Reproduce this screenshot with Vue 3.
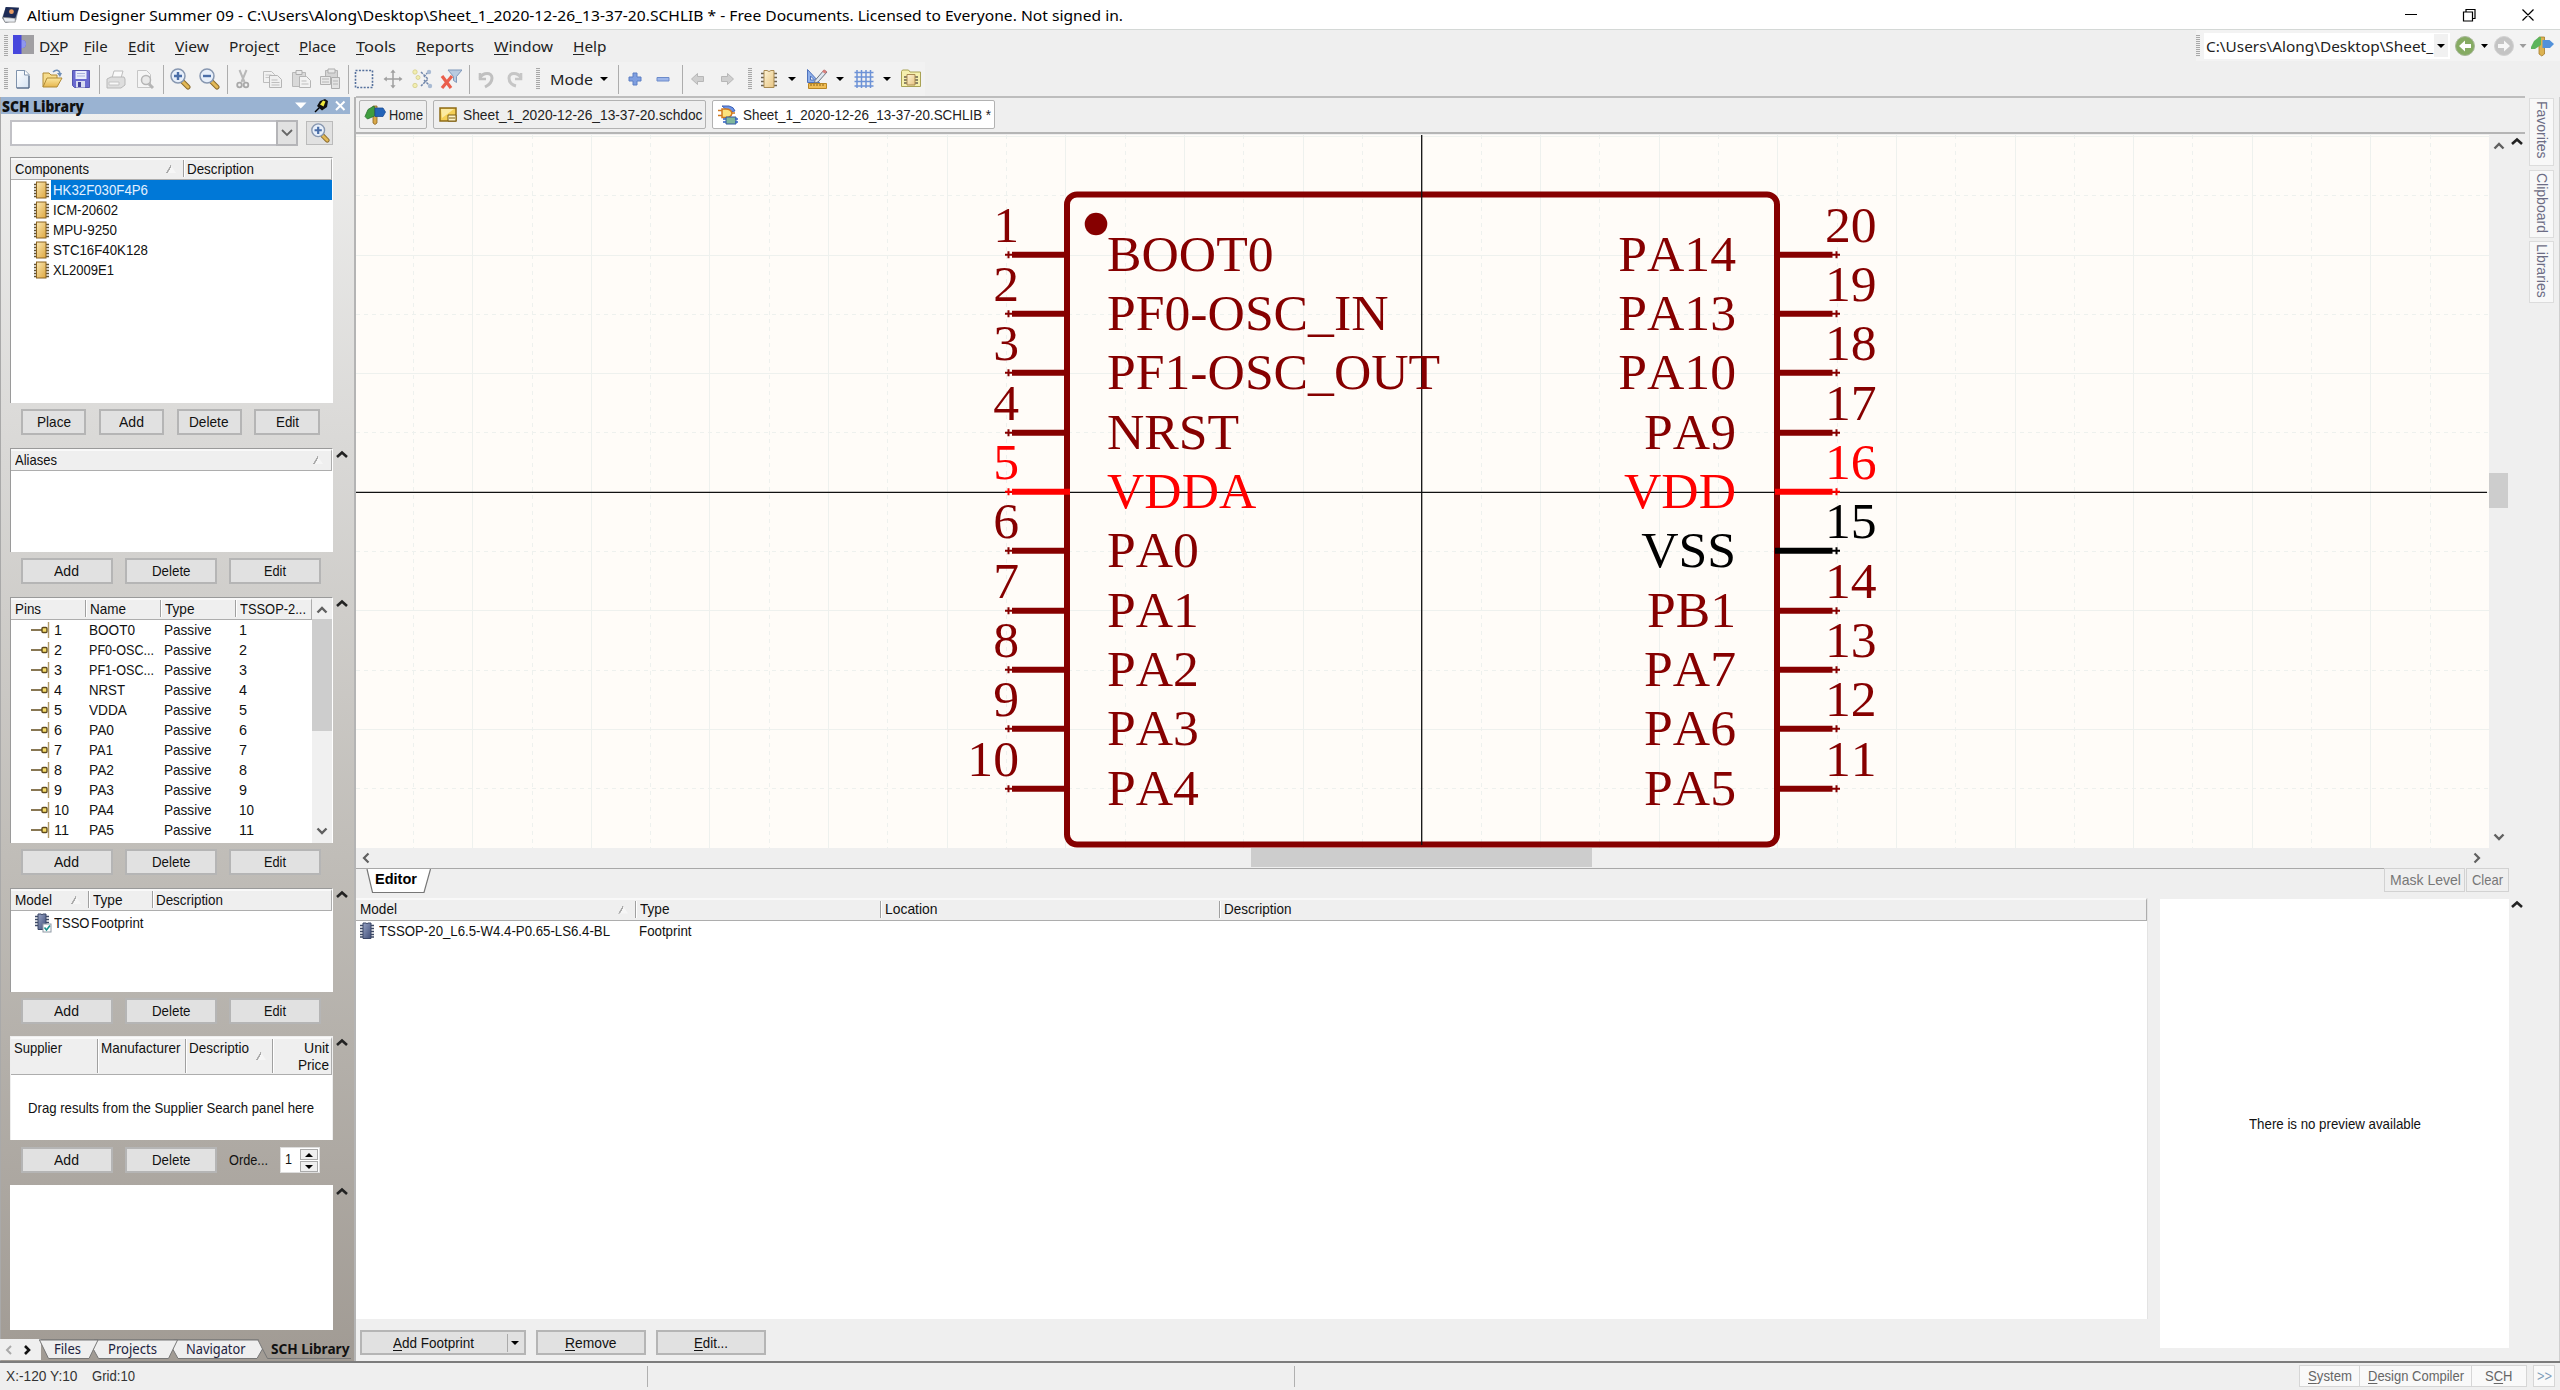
<script setup>
// Stretches or condenses a run of text to the given pixel width.
const vFit = {
  mounted(el, { value }) {
    const natural = el.getBoundingClientRect().width
    if (!natural) return
    el.style.transform = `scaleX(${value / natural})`
    el.style.marginRight = `${value - natural}px`
  },
}

const icons = {
  fresh: '<path d="M4.500 2.500h8.500l4 4v13.500H4.500z" fill="url(#paper)" stroke="#7f93ad"/><path d="M12.500 2.500v4.500h4.500" fill="#fff" stroke="#7f93ad"/><path d="M17 8v12H5" fill="none" stroke="#4d617f"/>',
  open: '<path d="M2 19V5h6l2 2h6v4" fill="#f6dc8c" stroke="#b08a35"/><path d="M2 19l4-9h15l-5 9z" fill="url(#gold)" stroke="#b08a35"/><path d="M12 4c3-3 6-2 7 1" fill="none" stroke="#6f8fb8" stroke-width="1.600"/><path d="M16 5l5 0-2 4z" fill="#6f8fb8"/>',
  save: '<path d="M2.500 2.500h17v17h-15l-2-2z" fill="#6a6ad0" stroke="#5555ad"/><rect x="5.500" y="3" width="11" height="8" fill="#e9ecfb"/><path d="M7 5.500h8M7 8h8" stroke="#a8b0dc"/><rect x="6" y="13" width="9" height="6.500" fill="#d8dcf2"/><rect x="8" y="14" width="3" height="5" fill="#43439c"/>',
  print: '<path d="M7 10l2-7h9l-2 7" fill="#fafafa" stroke="#bdbdbd"/><path d="M2 11l4-2h13l1 2v6l-4 3H2z" fill="#dedede" stroke="#b8b8b8"/><path d="M4 14h10v3H4z" fill="#f8f8f8" stroke="#c4c4c4"/>',
  preview: '<path d="M3.500 2.500h9l4 4v13h-13z" fill="#f5f5f5" stroke="#c6c6c6"/><circle cx="12" cy="12" r="4.500" fill="#e9e9e9" stroke="#b5b5b5" stroke-width="1.500"/><path d="M15 16l4 4" stroke="#b5b5b5" stroke-width="3"/>',
  zoomin: '<path d="M14 14l5 5" stroke="#8a6a2b" stroke-width="5" stroke-linecap="round"/><path d="M14 14l5 5" stroke="#e2b856" stroke-width="3" stroke-linecap="round"/><circle cx="9" cy="8" r="7" fill="#e7effa" stroke="#8797b0" stroke-width="1.500"/><path d="M9 4v8M5 8h8" stroke="#4a6ea8" stroke-width="2.400"/>',
  zoomout: '<path d="M14 14l5 5" stroke="#8a6a2b" stroke-width="5" stroke-linecap="round"/><path d="M14 14l5 5" stroke="#e2b856" stroke-width="3" stroke-linecap="round"/><circle cx="9" cy="8" r="7" fill="#e7effa" stroke="#8797b0" stroke-width="1.500"/><path d="M5 8h8" stroke="#4a6ea8" stroke-width="2.400"/>',
  cut: '<path d="M7.500 2l5 12M14.500 2l-5 12" stroke="#b9b9b9" stroke-width="2"/><circle cx="7.500" cy="17" r="2.300" fill="none" stroke="#a9a9a9" stroke-width="1.800"/><circle cx="14" cy="17" r="2.300" fill="none" stroke="#a9a9a9" stroke-width="1.800"/>',
  copy: '<path d="M2.500 3.500h8l3 3v8h-11z" fill="#f2f2f2" stroke="#bdbdbd"/><path d="M4.500 7h6M4.500 9.500h6" stroke="#c8c8c8"/><path d="M8.500 7.500h8l4 4v8h-12z" fill="#f0f0f0" stroke="#b5b5b5"/><path d="M10.500 12h6M10.500 14.500h8M10.500 17h8" stroke="#bdbdbd"/>',
  paste: '<path d="M2.500 4.500h13v14h-13z" fill="#d9d9d9" stroke="#b8b8b8"/><path d="M6 2.500h6v4H6z" fill="#e9e9e9" stroke="#adadad"/><path d="M9.500 8.500h7l4 4v7h-11z" fill="#f3f3f3" stroke="#b5b5b5"/><path d="M11.500 13h5M11.500 16h7" stroke="#bdbdbd"/>',
  pasteall: '<path d="M6.500 2.500h12v12h-12z" fill="#d4d4d4" stroke="#b3b3b3"/><path d="M9 1h7v4H9z" fill="#e9e9e9" stroke="#adadad"/><path d="M1.500 8.500h10v8h-10z" fill="#e9e9e9" stroke="#b0b0b0"/><path d="M12.500 9.500h8v11h-8z" fill="#e3e3e3" stroke="#adadad"/><path d="M3 11h7M3 14h7M14 13h5M14 16h5" stroke="#b5b5b5"/>',
  select: '<rect x="2.500" y="2.500" width="17" height="17" fill="none" stroke="#55709c" stroke-width="1.600" stroke-dasharray="2 1.400"/>',
  move: '<path d="M11 3.500v15M3.500 11h15" stroke="#a0a0a0" stroke-width="1.500"/><path d="M11 1.500l2.600 3.300H8.400zM11 20.500l2.600-3.300H8.400zM1.500 11l3.300-2.600v5.200zM20.500 11l-3.300-2.600v5.200z" fill="#a0a0a0"/>',
  wires: '<path d="M10 4l7 7-7 7M13 12l6 6M13 9l5-6" stroke="#7187ab" stroke-width="1.500" fill="none" stroke-dasharray="2.500 1"/><g fill="#f2eeb0" stroke="#d3cd8a" stroke-width=".8"><circle cx="4" cy="4" r="2.200"/><circle cx="7" cy="9.500" r="2"/><circle cx="4" cy="17.500" r="2.200"/></g><g fill="#a9bbd3"><circle cx="18" cy="4" r="2.200"/><circle cx="19" cy="18" r="2.200"/></g>',
  clearf: '<path d="M8 2h14l-5.500 6.500v6l-3-2v-4z" fill="#b9cbe0" stroke="#7f98ba"/><path d="M2 8l9 12M12 8L2 20" stroke="#ea5f4c" stroke-width="3.200"/>',
  undo: '<path d="M6 5v6h6" fill="none" stroke="#c0c0c0" stroke-width="2.600"/><path d="M6 10c3-6 12-6 12 0 0 4-3 7-7 9" fill="none" stroke="#c0c0c0" stroke-width="3"/>',
  redo: '<path d="M17 5v6h-6" fill="none" stroke="#c6c6c6" stroke-width="2.600"/><path d="M17 10C14 4 5 4 5 10c0 4 3 7 7 8" fill="none" stroke="#c6c6c6" stroke-width="3"/>',
  plus: '<path d="M9 5h4v4h4v4h-4v4H9v-4H5V9h4z" fill="#7f9fe0" stroke="#5c7fc4"/>',
  minus: '<path d="M5 9.500h12v3.500H5z" fill="#9db6ea" stroke="#6c8bca"/>',
  left: '<path d="M4.500 11l6-5.500v3h6v5h-6v3z" fill="#cfcfcf" stroke="#b7b7b7"/>',
  right: '<path d="M17.500 11l-6-5.500v3h-6v5h6v3z" fill="#cfcfcf" stroke="#b7b7b7"/>',
  part: '<path d="M3 5.500h16M3 9.500h16M3 13.500h16M3 17.500h16" stroke="#6b6250" stroke-width="1.600"/><path d="M6 2.500h3q2 2 4 0h3v17H6z" fill="url(#cream)" stroke="#a98a52"/>',
  ruler: '<path d="M1.500 1.500v13h12z" fill="#8fb0ea" stroke="#4e72bd"/><path d="M4.500 8v4h4z" fill="#f3f3f3" stroke="#4e72bd"/><path d="M9 12.500L18 2l3 2-9 10-3.500 1z" fill="#dfe6ef" stroke="#6d7480"/><path d="M18 1.500l3 2-2 2.300-3-2.300z" fill="#d9807c"/><path d="M2.500 15.500h18v5h-18z" fill="#f0bd55" stroke="#b98624"/><path d="M5 16v2M8 16v2M11 16v2M14 16v2M17 16v2" stroke="#8a6216"/>',
  grid: '<path d="M4 2v18M8.500 2v18M13 2v18M17.500 2v18M1.500 4.500h19M1.500 9h19M1.500 13.500h19M1.500 18h19" stroke="#6d92d6" stroke-width="1.500"/>',
  folder: '<path d="M1.500 3.500l1-1.500h6l1.500 2h10.500v14.500h-19z" fill="#f5f0ae" stroke="#a9a255"/><path d="M4 9h14M4 12h14M4 15h14" stroke="#6b6250" stroke-width="1.300"/><path d="M7 6.500h8v10.500H7z" fill="url(#cream)" stroke="#a98a52"/>',
  chip: '<path d="M1 3.500h15M1 6.500h15M1 9.500h15M1 12.500h15M1 15.500h15" stroke="#5e5238" stroke-width="1.300"/><rect x="3.500" y="1" width="9.500" height="16" fill="url(#amber)" stroke="#8a6320"/>',
  foot: '<path d="M1 3.500h14M1 6.500h14M1 9.500h14M1 12.500h14M1 15h14" stroke="#3e4a66" stroke-width="1.300"/><path d="M4 1h3q1 1.500 2 0h3v15.500H4z" fill="url(#slate)" stroke="#3a4666"/>',
  footok: '<path d="M0 3.500h14M0 6.500h14M0 9.500h14M0 12.500h14" stroke="#3e4a66" stroke-width="1.300"/><path d="M3 1h3q1 1.500 2 0h3v15.500H3z" fill="url(#slate)" stroke="#3a4666"/><rect x="8" y="11" width="8" height="8" fill="#fff" stroke="#8f9aa5"/><path d="M9.500 14.500l2 2.500 3.500-4.500" fill="none" stroke="#17908a" stroke-width="1.600"/>',
  pin: '<path d="M0 9h11" stroke="#6b5528" stroke-width="1.600"/><rect x="11" y="6.500" width="5" height="5" rx="1" fill="#f5dc6a" stroke="#5f4a1c" stroke-width="1.400"/><path d="M17.500 1v16" stroke="#b09a68" stroke-width="1.400"/>',
  sign: '<path d="M9 2h4v17l-2 1.500-2-1.500z" fill="#d9a848" stroke="#8b6520" stroke-width=".8"/><path d="M1 12.500l3-7 5-3h1.500v9.500l-7 3z" fill="#3f9e3f" stroke="#2b7030" stroke-width=".8"/><path d="M11 4h8l2.500 4-2.500 4.500h-8z" fill="#2464b8" stroke="#1f4f96" stroke-width=".8"/>',
}

const menus = [
  ['D', 'X', 'P', 29.5, 39], ['', 'F', 'ile', 24, 83.7], ['', 'E', 'dit', 27, 128], ['', 'V', 'iew', 34, 175],
  ['Proje', 'c', 't', 50.5, 229], ['', 'P', 'lace', 37, 299], ['', 'T', 'ools', 40, 356], ['', 'R', 'eports', 58, 416],
  ['', 'W', 'indow', 59, 494], ['', 'H', 'elp', 33.5, 573],
].map((m, i, all) => ({ pre: m[0], key: m[1], post: m[2], w: m[3], gap: i ? m[4] - all[i - 1][4] - all[i - 1][3] : 5 }))

// Each tool is [kind, centre on the bar, cell width].
const tools = [
  ['grip', 6, 4], ['fresh', 23, 22], ['open', 52, 22], ['save', 81, 22], ['sep', 99, 2], ['print', 116, 22],
  ['preview', 145, 22], ['sep', 163, 2], ['zoomin', 180, 22], ['zoomout', 209, 22], ['sep', 227, 2], ['cut', 243, 22],
  ['copy', 272, 22], ['paste', 301, 22], ['pasteall', 330, 22], ['sep', 348, 2], ['select', 364, 22], ['move', 393, 22],
  ['wires', 422, 22], ['clearf', 451, 22], ['sep', 469, 2], ['undo', 485, 22], ['redo', 515, 22], ['grip', 538, 4],
  ['mode', 571.5, 43], ['drop', 604, 8], ['sep', 618.5, 2], ['plus', 634.5, 22], ['minus', 663, 22], ['sep', 682, 2],
  ['left', 698, 22], ['right', 727, 22], ['grip', 750, 4], ['part', 769, 22], ['drop', 791.5, 8], ['ruler', 816.5, 22],
  ['drop', 839.5, 8], ['grid', 864, 22], ['drop', 886.5, 8], ['folder', 910.5, 22],
].map((t, i, all) => {
  const prev = i ? all[i - 1][1] + all[i - 1][2] / 2 : 0
  return { kind: t[0], w: t[2], gap: t[1] - t[2] / 2 - prev }
})

const components = [['HK32F030F4P6', 95], ['ICM-20602', 65], ['MPU-9250', 64], ['STC16F40K128', 95], ['XL2009E1', 61]]
const pinRows = [
  ['BOOT0', 46], ['PF0-OSC...', 65], ['PF1-OSC...', 65], ['NRST', 36], ['VDDA', 38], ['PA0', 25],
  ['PA1', 24], ['PA2', 25], ['PA3', 25], ['PA4', 25], ['PA5', 25],
]
const trio = [['Add', 25], ['Delete', 38.5], ['Edit', 22]]

const X0 = 1421.8, Y0 = 492.3, STEP = 59.32
const vLines = Array.from({ length: 35 }, (_, i) => i - 17).map(k => ({ p: Math.round(X0 + k * STEP - 0.5) + 0.5, dash: k % 2 !== 0 }))
const hLines = Array.from({ length: 12 }, (_, i) => i - 6).map(k => ({ p: Math.round(Y0 + k * STEP - 0.5) + 0.5, dash: k % 2 !== 0 }))
const leftNames = ['BOOT0', 'PF0-OSC_IN', 'PF1-OSC_OUT', 'NRST', 'VDDA', 'PA0', 'PA1', 'PA2', 'PA3', 'PA4']
const rightNames = ['PA14', 'PA13', 'PA10', 'PA9', 'VDD', 'VSS', 'PB1', 'PA7', 'PA6', 'PA5']
const tint = n => (n === 'VDDA' || n === 'VDD' ? '#ff0000' : n === 'VSS' ? '#000' : '#860000')
const pins = leftNames.map((l, i) => ({
  y: Math.round(254.7 + i * 59.33) - 0.3, l, r: rightNames[i], ln: i + 1, rn: 20 - i, lc: tint(l), rc: tint(rightNames[i]),
}))
</script>

<template>
  <div class="app">
    <svg class="defs" width="0" height="0">
      <defs>
        <linearGradient id="paper" x1="0" y1="0" x2="1" y2="1"><stop offset="0" stop-color="#fff" /><stop offset="1" stop-color="#d5e2f2" /></linearGradient>
        <linearGradient id="gold" x1="0" y1="0" x2="0" y2="1"><stop offset="0" stop-color="#fbe7a0" /><stop offset="1" stop-color="#e6b64e" /></linearGradient>
        <linearGradient id="cream" x1="0" y1="0" x2="1" y2="1"><stop offset="0" stop-color="#fdf3d4" /><stop offset="1" stop-color="#e8c583" /></linearGradient>
        <linearGradient id="amber" x1="0" y1="0" x2="1" y2="1"><stop offset="0" stop-color="#fbe9b4" /><stop offset="1" stop-color="#dda63e" /></linearGradient>
        <linearGradient id="slate" x1="0" y1="0" x2="1" y2="1"><stop offset="0" stop-color="#97a3c4" /><stop offset="1" stop-color="#3f4d78" /></linearGradient>
      </defs>
    </svg>

    <header class="title">
      <svg class="logo" viewBox="0 0 20 20"><path d="M5 2l14 1-3 13-11 3-4-5z" fill="#8d97a6" /><path d="M5 2l14 1-4 11-13-1z" fill="#1d2b55" /><path d="M2 13l13 1v4l-11 0z" fill="#e9edf2" stroke="#666" stroke-width=".6" /><circle cx="11" cy="7" r="2.500" fill="#e79b62" /></svg>
      <span class="cap"><span v-fit="1096">Altium Designer Summer 09 - C:\Users\Along\Desktop\Sheet_1_2020-12-26_13-37-20.SCHLIB * - Free Documents. Licensed to Everyone. Not signed in.</span></span>
      <svg class="winbtns" width="132" height="14" viewBox="0 0 132 14"><path d="M0 6.500h12M58.500 4h9v9h-9zM61 4V1.500h9v9h-2.500M117.500 1.500l11 11M128.500 1.500l-11 11" fill="none" stroke="#000" stroke-width="1.200" /></svg>
    </header>

    <nav class="menu">
      <i class="grip first"></i>
      <svg class="dxp" width="21" height="19" viewBox="0 0 21 19"><rect width="21" height="19" fill="#a09fa3" /><path d="M0 0h8.500v5c6-1 6 9 0 8v6H0z" fill="#4747dd" /><path d="M8.500 5c6-1 6 9 0 8z" fill="#8f97ee" /></svg>
      <span v-for="m in menus" :key="m.w" class="mi" :style="{ marginLeft: m.gap + 'px' }"><span v-fit="m.w">{{ m.pre }}<u>{{ m.key }}</u>{{ m.post }}</span></span>
      <div class="addr">
        <i class="grip"></i>
        <div class="field"><span v-fit="227">C:\Users\Along\Desktop\Sheet_</span><b class="fdrop"><i class="tri"></i></b></div>
        <svg width="104" height="26" viewBox="2453 32 104 26">
          <circle cx="2465" cy="45" r="9.500" fill="#86ab63" stroke="#a9b89b" /><path d="M2459 45l6-5.500v3.500h6v4h-6v3.500z" fill="#fff" />
          <path d="M2481 43h7l-3.500 4z" fill="#000" />
          <circle cx="2504" cy="45" r="9.500" fill="#c4c4c4" stroke="#d2d2d2" /><path d="M2510 45l-6-5.500v3.500h-6v4h6v3.500z" fill="#f6f6f6" />
          <path d="M2519.500 43h7l-3.500 4z" fill="#9b9b9b" />
          <path d="M2539 36h5.500v17l-2.700 2-2.800-2z" fill="#dcb251" stroke="#a57b2c" stroke-width=".8" /><path d="M2531 46l3-6 5-4h2v8l-6 4h-4z" fill="#5db45c" /><path d="M2542.500 39h7l4.500 4-4 4h-7.500z" fill="#5191da" />
        </svg>
      </div>
    </nav>

    <div class="tools">
      <div class="toolstrip">
        <div v-for="(t, i) in tools" :key="i" class="cell" :style="{ width: t.w + 'px', marginLeft: t.gap + 'px' }">
          <i v-if="t.kind === 'grip'" class="grip"></i>
          <i v-else-if="t.kind === 'sep'" class="vsep"></i>
          <i v-else-if="t.kind === 'drop'" class="tri"></i>
          <span v-else-if="t.kind === 'mode'" v-fit="43">Mode</span>
          <svg v-else width="22" height="22" viewBox="0 0 22 22" v-html="icons[t.kind]"></svg>
        </div>
      </div>
    </div>

    <main class="main">
      <aside class="side">
        <div class="phead">
          <b v-fit="82">SCH Library</b>
          <svg width="52" height="16" viewBox="294 98 52 16"><path d="M295 102.500h11.500l-5.700 6z" fill="#fff" /><path d="M315 112l5-5" stroke="#000" stroke-width="1.500" /><path d="M317 106l3-5 5-2 3 2-1 6-5 3.500z" fill="#111" /><path d="M320 104.500l3-4 2.500 1-2 5z" fill="#f0e83c" /><path d="M336 101.500l8.500 8.500M344.500 101.500l-8.500 8.500" stroke="#fff" stroke-width="2" /></svg>
        </div>
        <div class="search">
          <div class="combo"><span class="cbtn"><svg width="12" height="8" viewBox="0 0 12 8"><path d="M1 1l5 5 5-5" fill="none" stroke="#666" stroke-width="1.800" /></svg></span></div>
          <div class="zbtn"><svg width="20" height="20" viewBox="0 0 22 22" v-html="icons.zoomin"></svg></div>
        </div>

        <section class="sec comps">
          <div class="list">
            <div class="lh"><span class="c1"><span v-fit="74">Components</span><i class="sort"></i></span><i class="hs"></i><span class="c2"><span v-fit="67">Description</span></span></div>
            <div v-for="(c, i) in components" :key="c[0]" class="row">
              <svg class="ri" width="18" height="18" viewBox="0 0 18 18" v-html="icons.chip"></svg>
              <span class="rt" :class="{ sel: i === 0 }"><span v-fit="c[1]">{{ c[0] }}</span></span>
            </div>
          </div>
        </section>
        <div class="btns four"><button><span v-fit="34">Place</span></button><button><span v-fit="25">Add</span></button><button><span v-fit="39.500">Delete</span></button><button><span v-fit="23">Edit</span></button></div>

        <section class="sec aliases">
          <div class="list"><div class="lh"><span class="fill"><span v-fit="42">Aliases</span><i class="sort"></i></span></div></div>
          <svg class="chev" width="12" height="8" viewBox="0 0 12 8"><path d="M1 7l5-4.500L11 7" /></svg>
        </section>
        <div class="btns"><button v-for="b in trio" :key="b[0]"><span v-fit="b[1]">{{ b[0] }}</span></button></div>

        <section class="sec pinlist">
          <div class="list scroller">
            <div class="body">
              <div class="lh"><span class="p1"><span v-fit="26">Pins</span></span><i class="hs"></i><span class="p2"><span v-fit="36">Name</span></span><i class="hs"></i><span class="p2"><span v-fit="29.5">Type</span></span><i class="hs"></i><span class="p2"><span v-fit="66">TSSOP-2...</span></span></div>
              <div v-for="(p, i) in pinRows" :key="i" class="row prow">
                <svg class="pi" width="19" height="18" viewBox="0 0 19 18" v-html="icons.pin"></svg>
                <span class="n1"><span v-fit="i > 8 ? 15 : 8">{{ i + 1 }}</span></span>
                <span class="n2"><span v-fit="p[1]">{{ p[0] }}</span></span>
                <span class="n2"><span v-fit="47.5">Passive</span></span>
                <span class="n1"><span v-fit="i > 8 ? 15 : 8">{{ i + 1 }}</span></span>
              </div>
            </div>
            <div class="sb">
              <svg width="12" height="8" viewBox="0 0 12 8"><path d="M1.500 6.500L6 2l4.500 4.500" fill="none" stroke="#606060" stroke-width="2.400" /></svg>
              <i class="thumb"></i>
              <svg class="dn" width="12" height="8" viewBox="0 0 12 8"><path d="M1.500 1.500L6 6l4.500-4.500" fill="none" stroke="#606060" stroke-width="2.400" /></svg>
            </div>
          </div>
          <svg class="chev" width="12" height="8" viewBox="0 0 12 8"><path d="M1 7l5-4.500L11 7" /></svg>
        </section>
        <div class="btns"><button v-for="b in trio" :key="b[0]"><span v-fit="b[1]">{{ b[0] }}</span></button></div>

        <section class="sec models">
          <div class="list">
            <div class="lh"><span class="m1"><span v-fit="37">Model</span><i class="sort"></i></span><i class="hs"></i><span class="m2"><span v-fit="29.5">Type</span></span><i class="hs"></i><span class="c2"><span v-fit="67">Description</span></span></div>
            <div class="row mrow"><svg width="18" height="20" viewBox="0 0 18 20" v-html="icons.footok"></svg><span class="t1"><span v-fit="35.500">TSSO</span></span><span v-fit="52.500">Footprint</span></div>
          </div>
          <svg class="chev" width="12" height="8" viewBox="0 0 12 8"><path d="M1 7l5-4.500L11 7" /></svg>
        </section>
        <div class="btns"><button v-for="b in trio" :key="b[0]"><span v-fit="b[1]">{{ b[0] }}</span></button></div>

        <section class="sec supply">
          <div class="list">
            <div class="lh tall"><span class="s1"><span v-fit="48">Supplier</span></span><i class="hs"></i><span class="s2"><span v-fit="79.5">Manufacturer</span></span><i class="hs"></i><span class="s2"><span v-fit="60">Descriptio</span><i class="sort low"></i></span><i class="hs"></i><span class="s3"><span v-fit="25">Unit</span><span v-fit="31">Price</span></span></div>
            <div class="hint"><span v-fit="286">Drag results from the Supplier Search panel here</span></div>
          </div>
          <svg class="chev" width="12" height="8" viewBox="0 0 12 8"><path d="M1 7l5-4.500L11 7" /></svg>
        </section>
        <div class="btns order">
          <button><span v-fit="25">Add</span></button><button><span v-fit="38.5">Delete</span></button>
          <label><span v-fit="39">Orde...</span></label>
          <div class="spin"><span v-fit="7">1</span><div class="arrows"><b><i class="tri up"></i></b><b><i class="tri"></i></b></div></div>
        </div>

        <section class="sec blank">
          <div class="list bare"></div>
          <svg class="chev" width="12" height="8" viewBox="0 0 12 8"><path d="M1 7l5-4.500L11 7" /></svg>
        </section>

        <div class="ptabs">
          <svg width="351" height="22" viewBox="0 1339 351 22">
            <rect x="0" y="1339" width="41" height="21" fill="#efefef" />
            <path d="M11 1346l-4 4 4 4" fill="none" stroke="#a9a9a9" stroke-width="2" /><path d="M25 1346l4 4-4 4" fill="none" stroke="#111" stroke-width="2.600" />
            <path d="M39 1340h220" stroke="#777" />
            <g fill="#efefef" stroke="#777"><path d="M173.500 1340h84.500l4.500 9-5.500 9.500h-79l-5-9z" /><path d="M94 1340h83.500l-9 18.500H98.500l-5-9z" /><path d="M39.500 1340h58.500l-9 18.500H48.500z" /></g>
            <path d="M262.500 1349l5 9.500h84" fill="none" stroke="#777" />
          </svg>
          <div class="plabels"><span class="l1"><span v-fit="27">Files</span></span><span class="l2"><span v-fit="49">Projects</span></span><span class="l3"><span v-fit="59.500">Navigator</span></span><b><span v-fit="78.500">SCH Library</span></b></div>
        </div>
      </aside>

      <div class="center">
        <div class="doctabs">
          <div class="dt home"><svg width="22" height="22" viewBox="0 0 22 22" v-html="icons.sign"></svg><span v-fit="34">Home</span></div>
          <div class="dt doc"><svg width="18" height="16" viewBox="0 0 18 16"><path d="M1 1h16v13H1z" fill="#f4cf55" stroke="#8e6c18" stroke-width="1.500" /><path d="M2 2h13l-12 9z" fill="#fbeaa2" /><path d="M9 8h8v6H9z" fill="#fdf3c5" stroke="#7a5c14" /><path d="M10 11h6" stroke="#7a5c14" /></svg><span v-fit="239.5">Sheet_1_2020-12-26_13-37-20.schdoc</span></div>
          <div class="dt lib"><svg width="20" height="20" viewBox="0 0 20 20"><path d="M4 1h7q5 1 6 5l-6 1z" fill="#6d93e6" stroke="#3f62b4" /><path d="M0 5.500h4M0 10.500h4M14 8h3" stroke="#d0781e" stroke-width="1.500" /><path d="M4 4h4q5 0 6 4.300-1 4.200-6 4.200H4z" fill="#fbe27c" stroke="#d0781e" stroke-width="1.500" /><path d="M8 12h10v7H8z" fill="#7fb79b" stroke="#33599f" /><path d="M5 14h3M5 17h3M17 14h3M17 17h3" stroke="#2f62c4" stroke-width="1.400" /></svg><span v-fit="248">Sheet_1_2020-12-26_13-37-20.SCHLIB *</span></div>
        </div>
        <div class="editor">
          <div class="canvasrow">
            <svg class="canvas" width="2133" height="713" viewBox="356 135 2133 713">
              <rect x="356" y="135" width="2133" height="713" fill="#fffcf8" />
              <g stroke="#eef1ee">
                <path v-for="v in vLines" :key="'v' + v.p" :d="`M${v.p} 135V848`" :stroke-dasharray="v.dash ? '4 4' : null" />
                <path v-for="v in hLines" :key="'h' + v.p" :d="`M356 ${v.p}H2489`" :stroke-dasharray="v.dash ? '4 4' : null" />
              </g>
              <rect x="1067" y="194.500" width="710" height="650" rx="10" fill="none" stroke="#860000" stroke-width="6" />
              <path d="M1421.700 135V845M356 492.300H2487" stroke="#111" stroke-width="1.300" />
              <circle cx="1096" cy="224" r="11.300" fill="#860000" />
              <g v-for="p in pins" :key="p.y">
                <path :d="`M1012 ${p.y}H${p.ln === 5 ? 1070 : 1067}`" :stroke="p.lc" stroke-width="6" />
                <path :d="`M1005 ${p.y}H1012M1008.500 ${p.y - 3.500}v7`" :stroke="p.lc" stroke-width="2" />
                <path :d="`M${p.rn === 16 || p.rn === 15 ? 1775 : 1777} ${p.y}H1832.500`" :stroke="p.rc" stroke-width="6" />
                <path :d="`M1832 ${p.y}H1840M1836.500 ${p.y - 3.500}v7`" :stroke="p.rc" stroke-width="2" />
                <text x="1019" :y="p.y - 13" text-anchor="end" :fill="p.lc">{{ p.ln }}</text>
                <text x="1107" :y="p.y + 16.700" :fill="p.lc">{{ p.l }}</text>
                <text x="1736" :y="p.y + 16.700" text-anchor="end" :fill="p.rc">{{ p.r }}</text>
                <text x="1825" :y="p.y - 13" :fill="p.rc">{{ p.rn }}</text>
              </g>
            </svg>
            <div class="vbar">
              <svg width="12" height="8" viewBox="0 0 12 8"><path d="M1.500 6.500L6 2l4.500 4.500" fill="none" stroke="#606060" stroke-width="2.400" /></svg>
              <i class="thumb"></i>
              <svg class="dn" width="12" height="8" viewBox="0 0 12 8"><path d="M1.500 1.500L6 6l4.500-4.500" fill="none" stroke="#606060" stroke-width="2.400" /></svg>
            </div>
            <svg class="chev ext" width="12" height="8" viewBox="0 0 12 8"><path d="M1 7l5-4.500L11 7" /></svg>
          </div>
          <div class="hbar">
            <svg width="8" height="12" viewBox="0 0 8 12"><path d="M6.500 1.500L2 6l4.500 4.500" fill="none" stroke="#606060" stroke-width="2.200" /></svg>
            <i class="thumb"></i>
            <svg class="hright" width="8" height="12" viewBox="0 0 8 12"><path d="M1.500 1.500L6 6l-4.500 4.500" fill="none" stroke="#606060" stroke-width="2.200" /></svg>
          </div>
          <div class="etabs">
            <div class="rule"><div class="etab"><svg width="66" height="25" viewBox="0 0 66 25"><path d="M1 0l5.500 23.500h51.500L64.500 0" fill="#fff" stroke="#777" stroke-width="1.200" /></svg><b><span v-fit="42">Editor</span></b></div></div>
            <div class="mask"><span v-fit="71">Mask Level</span></div><div class="mask clr"><span v-fit="31">Clear</span></div>
          </div>
          <div class="lower">
            <div class="tablecol">
              <div class="table">
                <div class="lh"><span class="t1"><span v-fit="37">Model</span><i class="sort"></i></span><i class="hs"></i><span class="t2"><span v-fit="29.5">Type</span></span><i class="hs"></i><span class="t3"><span v-fit="52.5">Location</span></span><i class="hs"></i><span class="t2"><span v-fit="67.5">Description</span></span></div>
                <div class="row trow"><svg width="16" height="18" viewBox="0 0 16 18" v-html="icons.foot"></svg><span class="tn"><span v-fit="231">TSSOP-20_L6.5-W4.4-P0.65-LS6.4-BL</span></span><span v-fit="52.500">Footprint</span></div>
              </div>
              <div class="acts">
                <button class="addf"><span class="lbl"><span v-fit="81"><u>A</u>dd Footprint</span></span><i class="bs"></i><i class="tri"></i></button>
                <button><span v-fit="51.500"><u>R</u>emove</span></button>
                <button><span v-fit="34"><u>E</u>dit...</span></button>
              </div>
            </div>
            <div class="preview"><span v-fit="172">There is no preview available</span></div>
            <svg class="chev pv" width="12" height="8" viewBox="0 0 12 8"><path d="M1 7l5-4.500L11 7" /></svg>
          </div>
        </div>
      </div>

      <div class="rail">
        <div class="rt1"><span>Favorites</span></div>
        <div class="rt1"><span>Clipboard</span></div>
        <div class="rt1 short"><span>Libraries</span></div>
      </div>
    </main>

    <footer class="status">
      <span class="st1"><span v-fit="71.500">X:-120 Y:10</span><span class="gr"><span v-fit="43">Grid:10</span></span></span>
      <i class="ss"></i><i class="ss two"></i>
      <div class="sys">
        <span class="b1"><span v-fit="44"><u>S</u>ystem</span></span><span class="b2"><span v-fit="96"><u>D</u>esign Compiler</span></span><span class="b3"><span v-fit="27.5">S<u>C</u>H</span></span>
      </div>
      <div class="more"><span v-fit="15">&gt;&gt;</span></div>
    </footer>
  </div>
</template>

<style>
body { margin: 0; overflow: hidden; }
</style>

<style scoped>
.app, .app * { box-sizing: border-box; }
.app { width: 2560px; height: 1390px; display: flex; flex-direction: column; background: #efefef; font: 15px/20px "Liberation Sans", Arial, sans-serif; color: #111; overflow: hidden; white-space: nowrap; }
.app span { transform-origin: 0 50%; flex: none; white-space: nowrap; }
.app b { transform-origin: 0 50%; flex: none; }
.defs { position: absolute; }
svg { display: block; flex: none; }
i { display: block; flex: none; }
u { text-underline-offset: 2px; text-decoration-thickness: 1px; }
button { font: inherit; color: inherit; background: #e1e1e1; border: 2px solid #b5b5b5; padding: 0; display: flex; align-items: center; justify-content: center; }

.title { height: 30px; background: #fff; border-bottom: 1px solid #d4d8d6; display: flex; align-items: center; padding-left: 1px; font: 15px/28px "Noto Sans", sans-serif; color: #000; }
.logo { width: 19px; height: 19px; margin: 0 7px 1px 0; }
.cap { flex: 1; display: flex; }
.winbtns { margin: 0 23px 0 auto; }
.menu { height: 32px; display: flex; align-items: center; padding-bottom: 1px; font: 15px/30px "Noto Sans", sans-serif; color: #222; }
.grip { width: 4px; height: 22px; background: repeating-linear-gradient(#a8a8a8 0 1px, #efefef 1px 2px); }
.grip.first { margin-left: 4px; }
.dxp { margin: 0 0 2px 5px; }
.mi { display: flex; }
.addr { margin-left: auto; display: flex; align-items: center; height: 31px; background: #f3f3f3; padding-right: 3px; }
.field { margin: 0 3px 0 4px; width: 246px; height: 26px; background: #fff; display: flex; align-items: center; padding-left: 2px; line-height: 26px; }
.fdrop { margin-left: 1px; width: 14px; height: 23px; background: #f1f1f1; display: flex; align-items: center; justify-content: center; }
.tri { width: 0; height: 0; border: 4px solid transparent; border-top: 4px solid #000; border-bottom: 0; }
.tri.up { border-top: 0; border-bottom: 4px solid #000; }

.tools { height: 35px; display: flex; }
.toolstrip { width: 925px; background: #f2f2f2; display: flex; align-items: center; padding-bottom: 1px; font: 15px/30px "Noto Sans", sans-serif; color: #222; }
.cell { flex: none; height: 34px; display: flex; align-items: center; justify-content: center; }
.cell .vsep { width: 1px; height: 29px; background: #adadad; }

.main { height: 1264px; display: flex; }
.side { width: 356px; border-right: 2px solid #b4b4b4; border-left: 1px solid #a9a9a9; background: linear-gradient(#f0f0ef, #d9d8d6 28%, #c0bdb8 60%, #a19b94); display: flex; flex-direction: column; align-items: flex-start; }
.phead { width: 349px; height: 17px; background: #9ab3d2; display: flex; align-items: center; justify-content: space-between; padding: 1px 4px 0 1px; font: bold 15px/16px "Noto Sans", sans-serif; }
.search { margin: 6px 0 0 9px; display: flex; align-items: center; height: 26px; }
.combo { width: 288px; height: 26px; border: 2px solid #c1c1c6; background: #fff; display: flex; justify-content: flex-end; }
.cbtn { width: 22px; background: #e1e1e1; border: 2px solid #b5b5b8; display: flex; align-items: center; justify-content: center; margin: -2px; height: 26px; }
.zbtn { margin-left: 8px; width: 27px; height: 24px; background: #e1e1e1; border: 1.500px solid #bbb; display: flex; align-items: center; justify-content: center; }
.sec { display: flex; padding-left: 9px; align-items: flex-start; }
.list { width: 323px; height: 100%; background: #fff; border-left: 1px solid #9a9a9a; border-top: 1px solid #9a9a9a; border-right: 1px solid #fff; display: flex; flex-direction: column; }
.comps { height: 246px; margin-top: 11px; }
.aliases { height: 104px; margin-top: 13px; }
.pinlist { height: 246px; margin-top: 13px; }
.models { height: 104px; margin-top: 13px; }
.supply { height: 104px; margin-top: 12px; }
.blank { height: 145px; margin-top: 12px; }
.list.bare { border-color: #fff; }
.supply .list { border-color: #eee; }
.lh { height: 22px; flex: none; background: #efefef; border-top: 2px solid #f9f9f9; border-bottom: 1.500px solid #adadad; border-right: 1px solid #adadad; display: flex; align-items: center; line-height: 16px; padding-bottom: 2px; }
.lh > span { display: flex; align-items: center; }
.hs { width: 1px; height: 17px; background: #a0a0a0; box-shadow: 1px 0 #fff; }
.sort { width: 11px; height: 9px; margin-left: auto; background: linear-gradient(118deg, transparent 0 37%, #a8a8a8 38% 47%, #f6f6f6 48%); clip-path: polygon(45% 0, 100% 100%, 0 100%); }
.c1 { width: 172px; padding: 0 7px 0 4px; }
.c2 { padding-left: 3px; }
.fill { width: 100%; padding: 0 8px 0 4px; }
.row { height: 20px; display: flex; align-items: center; }
.ri { margin: 0 0 0 22px; }
.rt { flex: 1 !important; height: 20px; display: flex; padding-left: 2px; }
.rt.sel { background: #0078d7; color: #e4f1ff; }
.chev { margin: 2px 0 0 3px; }
.chev path { fill: none; stroke: #222; stroke-width: 2.600; }
.btns { display: flex; margin: 6px 0 0 20px; gap: 12.500px; height: 26px; }
.btns button { width: 91.500px; height: 26px; }
.btns.four button { width: 65.300px; }
.scroller { flex-direction: row; }
.body { width: 301px; }
.p1 { width: 74px; padding-left: 4px; }
.p2 { width: 74px; padding-left: 4px; }
.prow { padding-left: 20px; }
.pi { margin-right: 4px; }
.n1 { width: 34.500px; display: flex; }
.n2 { width: 75px; display: flex; }
.sb { width: 20px; background: #f0f0f0; display: flex; flex-direction: column; align-items: center; padding: 8px 0; }
.sb .thumb { width: 20px; height: 112px; background: #cdcdcd; margin-top: 5px; }
.dn { margin-top: auto; }
.m1 { width: 77px; padding: 0 7px 0 4px; }
.m2 { width: 63px; padding-left: 4px; }
.mrow { padding: 1px 0 0 24px; height: 22px; }
.mrow .t1 { width: 36.500px; margin-left: 1px; display: flex; }
.lh.tall { height: 38px; align-items: stretch; line-height: 17px; padding-bottom: 0; }
.lh.tall > span { align-items: flex-start; }
.lh.tall .hs { height: 34px; }
.s1 { width: 86px; padding-left: 3px; }
.s2 { width: 86.500px; padding-left: 3px; }
.sort.low { margin: 12px 6px 0 auto; }
.lh.tall .s3 { flex: 1; flex-direction: column; align-items: flex-end; padding-right: 2px; line-height: 17px; }
.hint { flex: 1; display: flex; align-items: center; padding: 0 0 0 17px; }
.order { margin-top: 7px; }
.order label { display: flex; align-items: center; width: 38px; }
.spin { width: 40px; background: #fff; display: flex; justify-content: space-between; padding: 1px 1px 1px 4px; line-height: 20px; border: 1px solid #ddd; }
.arrows { display: flex; flex-direction: column; gap: 1px; }
.arrows b { width: 18px; height: 11px; background: #efefef; border: 1px solid #aaa; display: flex; align-items: center; justify-content: center; }
.ptabs { margin-top: 9px; width: 351px; height: 22px; position: relative; margin-left: -1px; }
.plabels { position: absolute; inset: 0; display: flex; font: 14px/19px "Noto Sans", sans-serif; color: #1d2340; padding-left: 54px; }
.plabels > * { display: flex; }
.l1 { width: 54px; }
.l2 { width: 78px; }
.l3 { width: 85px; }
.plabels b { color: #111; width: 80px; }

.center { width: 2169px; display: flex; flex-direction: column; }
.doctabs { height: 38px; margin-top: -1px; border-top: 2px solid #bdbdbd; border-bottom: 2px solid #b5b5b5; display: flex; gap: 6px; padding: 2px 0 0 3px; font-size: 14px; color: #222; }
.dt { height: 29px; border: 1.500px solid #b2b2b2; border-radius: 2px; display: flex; align-items: center; background: #efefef; }
.dt.home { width: 68px; padding-left: 4px; gap: 3px; }
.dt.doc { width: 273px; padding-left: 5px; gap: 6px; }
.dt.lib { width: 283px; padding-left: 5px; gap: 5px; background: #fff; }
.editor { flex: 1; display: flex; flex-direction: column; }
.canvasrow { display: flex; height: 713px; margin-top: 1px; }
.canvas text { font: 51.700px "Liberation Serif", "Times New Roman", serif; font-kerning: none; }
.vbar { width: 19px; display: flex; flex-direction: column; align-items: center; padding: 7px 0; }
.vbar .thumb { width: 19px; height: 35px; background: #cdcdcd; margin-top: 323px; }
.ext { margin: 2px 0 0 3px; }
.hbar { height: 20px; display: flex; align-items: center; padding: 0 0 1px 6px; }
.hbar .thumb { width: 341px; height: 19px; background: #cdcdcd; margin-left: 881px; }
.hright { margin-left: 881px; }
.etabs { height: 30px; display: flex; align-items: flex-start; }
.rule { width: 2028px; height: 24px; border-top: 1.500px solid #a8a8a8; padding-left: 10px; }
.etab { position: relative; width: 66px; }
.etab b { position: absolute; left: 9px; top: 0; display: flex; line-height: 20px; color: #000; }
.mask { width: 81px; height: 24px; border: 1.500px solid #d2d2d2; display: flex; align-items: center; padding-left: 5px; color: #777; }
.mask.clr { width: 43px; margin-left: 1px; }
.lower { flex: 1; display: flex; align-items: flex-start; }
.tablecol { width: 1792px; margin-right: 12px; }
.table { height: 421px; background: #fff; border-right: 1px solid #e3e3e3; }
.table .lh { height: 23px; }
.table .lh > .t1 { width: 279px; padding: 0 7px 0 4px; }
.t2 { width: 244px; padding-left: 4px; }
.t3 { width: 338px; padding-left: 4px; }
.trow { padding-left: 3px; }
.tn { width: 259.500px; margin-left: 4px; display: flex; }
.acts { display: flex; gap: 10px; padding: 11px 0 0 4px; }
.acts button { width: 110px; height: 25px; }
.acts .addf { width: 166px; justify-content: flex-start; padding-left: 31px; }
.lbl { width: 114px; display: flex; }
.bs { width: 1px; height: 18px; background: #aaa; margin-right: 3px; }
.preview { width: 349px; height: 449px; background: #fff; display: flex; align-items: center; justify-content: center; padding-top: 1px; margin-top: 1px; }
.pv { margin: 2px 0 0 2px; }

.rail { width: 35px; border-right: 1px solid #cfcfcf; padding: 1px 0 0 4px; display: flex; flex-direction: column; gap: 3.500px; }
.rt1 { width: 25px; height: 68px; border: 1.500px solid #dcdcdc; background: #f8f8f8; writing-mode: vertical-rl; display: flex; align-items: center; padding-top: 2px; font: 14px/20px "Liberation Sans", Arial, sans-serif; color: #6c6c84; }
.rt1.short { height: 62px; }

.status { height: 29px; border-top: 2px solid #7c7c7c; display: flex; align-items: center; padding: 0 0 1px 6px; color: #333; }
.st1 { display: flex; width: 641px; }
.gr { margin-left: 14px; display: flex; }
.ss { width: 1px; height: 21px; background: #b0b0b0; }
.ss.two { margin-left: 646px; }
.sys { margin-left: auto; display: flex; height: 22px; border: 1.500px solid #d6d6d6; background: #f9f9f9; color: #666; }
.sys > span { display: flex; align-items: center; justify-content: center; height: 100%; border-right: 1.500px solid #d6d6d6; }
.sys .b1 { width: 60px; }
.sys .b2 { width: 112px; }
.sys .b3 { width: 54px; border-right: 0; }
.more { width: 22px; height: 22px; margin: 0 5px 0 6px; border: 1.500px solid #d6d6d6; background: #f9f9f9; display: flex; align-items: center; justify-content: center; color: #7d9cb8; }
</style>
